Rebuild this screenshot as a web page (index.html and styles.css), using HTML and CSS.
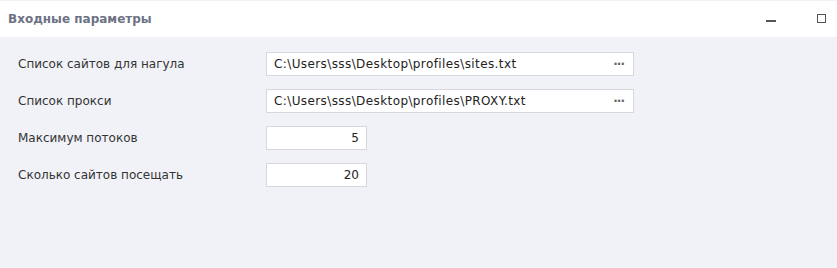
FILE: index.html
```html
<!DOCTYPE html>
<html lang="ru">
<head>
  <meta charset="UTF-8" />
  <title>Входные параметры</title>
  <link rel="stylesheet" href="styles.css">
</head>
<body>
  <div class="header">
    <span class="title">Входные параметры</span>
    <div class="win-buttons">
      <span class="btn-min"></span>
      <span class="btn-max"></span>
    </div>
  </div>

  <div class="form">
    <div class="row">
      <label>Список сайтов для нагула</label>
      <div class="field wide">
        <span class="value">C:\Users\sss\Desktop\profiles\sites.txt</span>
        <span class="dots">···</span>
      </div>
    </div>
    <div class="row">
      <label>Список прокси</label>
      <div class="field wide">
        <span class="value">C:\Users\sss\Desktop\profiles\PROXY.txt</span>
        <span class="dots">···</span>
      </div>
    </div>
    <div class="row">
      <label>Максимум потоков</label>
      <div class="field num">5</div>
    </div>
    <div class="row">
      <label>Сколько сайтов посещать</label>
      <div class="field num">20</div>
    </div>
  </div>
</body>
</html>
```

FILE: styles.css
```css
body {
  margin: 0;
  background-color: #f1f2f7;
  font-family: "DejaVu Sans", Tahoma, sans-serif;
  font-size: 12px;
  color: #333;
  padding-top: 1px;
}
.header {
  background-color: #fff;
  height: 36px;
  display: flex;
  align-items: center;
  justify-content: space-between;
  padding: 0 8px;
}
.title {
  font-weight: bold;
  color: #6c7283;
  font-size: 12px;
}
.win-buttons {
  display: flex;
  align-items: center;
  gap: 41px;
  padding-right: 3px;
  padding-top: 3px;
}
.btn-min {
  width: 10px;
  height: 2px;
  background-color: #555;
}
.btn-max {
  width: 7px;
  height: 7px;
  border: 1px solid #555;
  margin-top: -4px;
}
.form {
  padding: 15px 0 0 18px;
}
.row {
  display: flex;
  align-items: center;
  height: 24px;
  margin-bottom: 13px;
}
label {
  width: 248px;
  color: #333;
}
.field {
  background-color: #fff;
  border: 1px solid #d6d8de;
  box-sizing: border-box;
  height: 24px;
  display: flex;
  align-items: center;
  padding: 0 7px;
  color: #222;
}
.wide {
  width: 368px;
  justify-content: space-between;
}
.value {
  letter-spacing: 0.4px;
}
.dots {
  color: #666;
  font-size: 12px;
  font-weight: bold;
  letter-spacing: -1px;
  padding-right: 2px;
}
.num {
  width: 101px;
  justify-content: flex-end;
}
```
